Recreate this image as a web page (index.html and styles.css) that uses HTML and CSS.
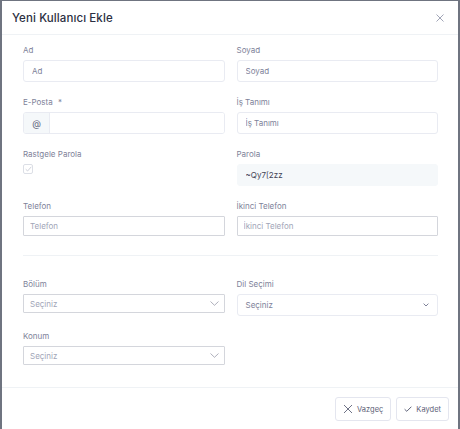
FILE: index.html
```html
<!DOCTYPE html>
<html lang="tr">
<head>
    <meta charset="UTF-8">
    <title>Yeni Kullanıcı Ekle</title>
    <link rel="stylesheet" href="styles.css">
</head>
<body>
    <div class="modal">
        <header class="modal-header">
            <h2 class="modal-title">Yeni Kullanıcı Ekle</h2>
            <button class="close-btn" aria-label="Kapat">
                <svg width="8" height="8" viewBox="0 0 8 8"><path d="M0.5 0.5L7.5 7.5M7.5 0.5L0.5 7.5" stroke="#a1a5b7" stroke-width="1"/></svg>
            </button>
        </header>

        <main class="modal-body">
            <div class="grid">
                <div class="field">
                    <label class="label">Ad</label>
                    <input class="input" placeholder="Ad">
                </div>
                <div class="field">
                    <label class="label">Soyad</label>
                    <input class="input" placeholder="Soyad">
                </div>

                <div class="field">
                    <label class="label">E-Posta <span class="req">*</span></label>
                    <div class="input-group">
                        <span class="addon">@</span>
                        <input class="input">
                    </div>
                </div>
                <div class="field">
                    <label class="label">İş Tanımı</label>
                    <input class="input" placeholder="İş Tanımı">
                </div>

                <div class="field">
                    <label class="label">Rastgele Parola</label>
                    <span class="checkbox">
                        <svg width="7" height="6" viewBox="0 0 7 6"><path d="M0.7 3.2L2.6 5L6.3 0.8" fill="none" stroke="#c4c7d2" stroke-width="0.8"/></svg>
                    </span>
                </div>
                <div class="field">
                    <label class="label">Parola</label>
                    <input class="input input-solid" value="~Qy7[2zz">
                </div>

                <div class="field">
                    <label class="label">Telefon</label>
                    <input class="input input-plain" placeholder="Telefon">
                </div>
                <div class="field">
                    <label class="label">İkinci Telefon</label>
                    <input class="input input-plain" placeholder="İkinci Telefon">
                </div>
            </div>

            <hr class="divider">

            <div class="grid">
                <div class="field">
                    <label class="label">Bölüm</label>
                    <div class="select select-plain">
                        <span>Seçiniz</span>
                        <svg width="9" height="5" viewBox="0 0 9 5"><path d="M0.5 0.5L4.5 4.3L8.5 0.5" fill="none" stroke="#9a9cab" stroke-width="0.8"/></svg>
                    </div>
                </div>
                <div class="field">
                    <label class="label">Dil Seçimi</label>
                    <div class="select">
                        <span>Seçiniz</span>
                        <svg width="6" height="4" viewBox="0 0 6 4"><path d="M0.6 0.6L3 3L5.4 0.6" fill="none" stroke="#7e8299" stroke-width="1"/></svg>
                    </div>
                </div>

                <div class="field">
                    <label class="label">Konum</label>
                    <div class="select select-plain">
                        <span>Seçiniz</span>
                        <svg width="9" height="5" viewBox="0 0 9 5"><path d="M0.5 0.5L4.5 4.3L8.5 0.5" fill="none" stroke="#9a9cab" stroke-width="0.8"/></svg>
                    </div>
                </div>
            </div>
        </main>

        <footer class="modal-footer">
            <button class="btn">
                <svg width="10" height="10" viewBox="0 0 10 10"><path d="M1 1L9 9M9 1L1 9" stroke="#5e6278" stroke-width="0.9"/></svg>
                Vazgeç
            </button>
            <button class="btn">
                <svg width="8" height="6" viewBox="0 0 8 6"><path d="M0.6 3.2L2.8 5.3L7.4 0.7" fill="none" stroke="#5e6278" stroke-width="1"/></svg>
                Kaydet
            </button>
        </footer>
    </div>
</body>
</html>
```

FILE: styles.css
```css
* {
    margin: 0;
    padding: 0;
    box-sizing: border-box;
}

body {
    font-family: "Inter", "Noto Sans", sans-serif;
    background: #6f7480;
    padding: 1px 2px 0 2px;
    height: 429px;
    overflow: hidden;
}

.modal {
    background: #ffffff;
    width: 456px;
    min-height: 440px;
    color: #3f4254;
}

.modal-header {
    height: 34px;
    display: flex;
    align-items: center;
    justify-content: space-between;
    padding: 0 14px 0 10px;
    border-bottom: 1px solid #eff2f5;
}

.modal-title {
    font-size: 11.5px;
    font-weight: 500;
    color: #2b2f42;
    letter-spacing: 0.1px;
}

.close-btn {
    background: none;
    border: none;
    display: flex;
    cursor: pointer;
}

.modal-body {
    padding: 9px 20px 0 21px;
    height: 352px;
}

.grid {
    display: grid;
    grid-template-columns: 1fr 1fr;
    column-gap: 12px;
}

.field {
    margin-bottom: 14px;
}

.label {
    display: block;
    font-size: 8px;
    line-height: 12px;
    color: #7e8299;
    margin-bottom: 4px;
}

.req {
    margin-left: 3px;
}

.input {
    display: block;
    width: 100%;
    height: 22px;
    border: 1px solid #e9ebf2;
    border-radius: 3px;
    padding: 0 8px;
    font-family: inherit;
    font-size: 8px;
    color: #5e6278;
    background: #fff;
    outline: none;
}

.input::placeholder {
    color: #7e8299;
}

.input-solid {
    background: #f5f8fa;
    border-color: #f5f8fa;
    color: #3f4254;
}

.input-plain {
    height: 20px;
    border: 1px solid #d4d6dc;
    border-radius: 1px;
    padding: 0 6px;
}

.input-plain::placeholder {
    color: #a1a5b7;
}

.input-group {
    display: flex;
    height: 22px;
    border: 1px solid #e9ebf2;
    border-radius: 3px;
    overflow: hidden;
}

.input-group .input {
    border: none;
    border-radius: 0;
    height: 20px;
}

.addon {
    width: 26px;
    flex: none;
    background: #f5f8fa;
    border-right: 1px solid #e9ebf2;
    display: flex;
    align-items: center;
    justify-content: center;
    font-size: 9px;
    color: #5e6278;
}

.checkbox {
    display: flex;
    align-items: center;
    justify-content: center;
    width: 10px;
    height: 10px;
    margin-top: 4px;
    border: 1px solid #dcdfe6;
    border-radius: 2px;
    margin-bottom: 8px;
}

.divider {
    border: none;
    border-top: 1px solid #eff2f5;
    margin: 5px 0 22px 0;
}

.select {
    height: 22px;
    border: 1px solid #e9ebf2;
    border-radius: 3px;
    display: flex;
    align-items: center;
    justify-content: space-between;
    padding: 0 8px;
    font-size: 8px;
    color: #7e8299;
}

.select-plain {
    height: 19px;
    border: 1px solid #d4d6dc;
    border-radius: 1px;
    padding: 0 5px 0 6px;
    color: #a1a5b7;
}

.modal-footer {
    border-top: 1px solid #eff2f5;
    display: flex;
    justify-content: flex-end;
    gap: 5px;
    padding: 9px 9px 0 0;
}

.btn {
    display: flex;
    align-items: center;
    gap: 4px;
    height: 24px;
    padding: 0 7px;
    background: #fff;
    border: 1px solid #e4e6ef;
    border-radius: 3px;
    font-family: inherit;
    font-size: 7.5px;
    color: #5e6278;
    cursor: pointer;
}
```
